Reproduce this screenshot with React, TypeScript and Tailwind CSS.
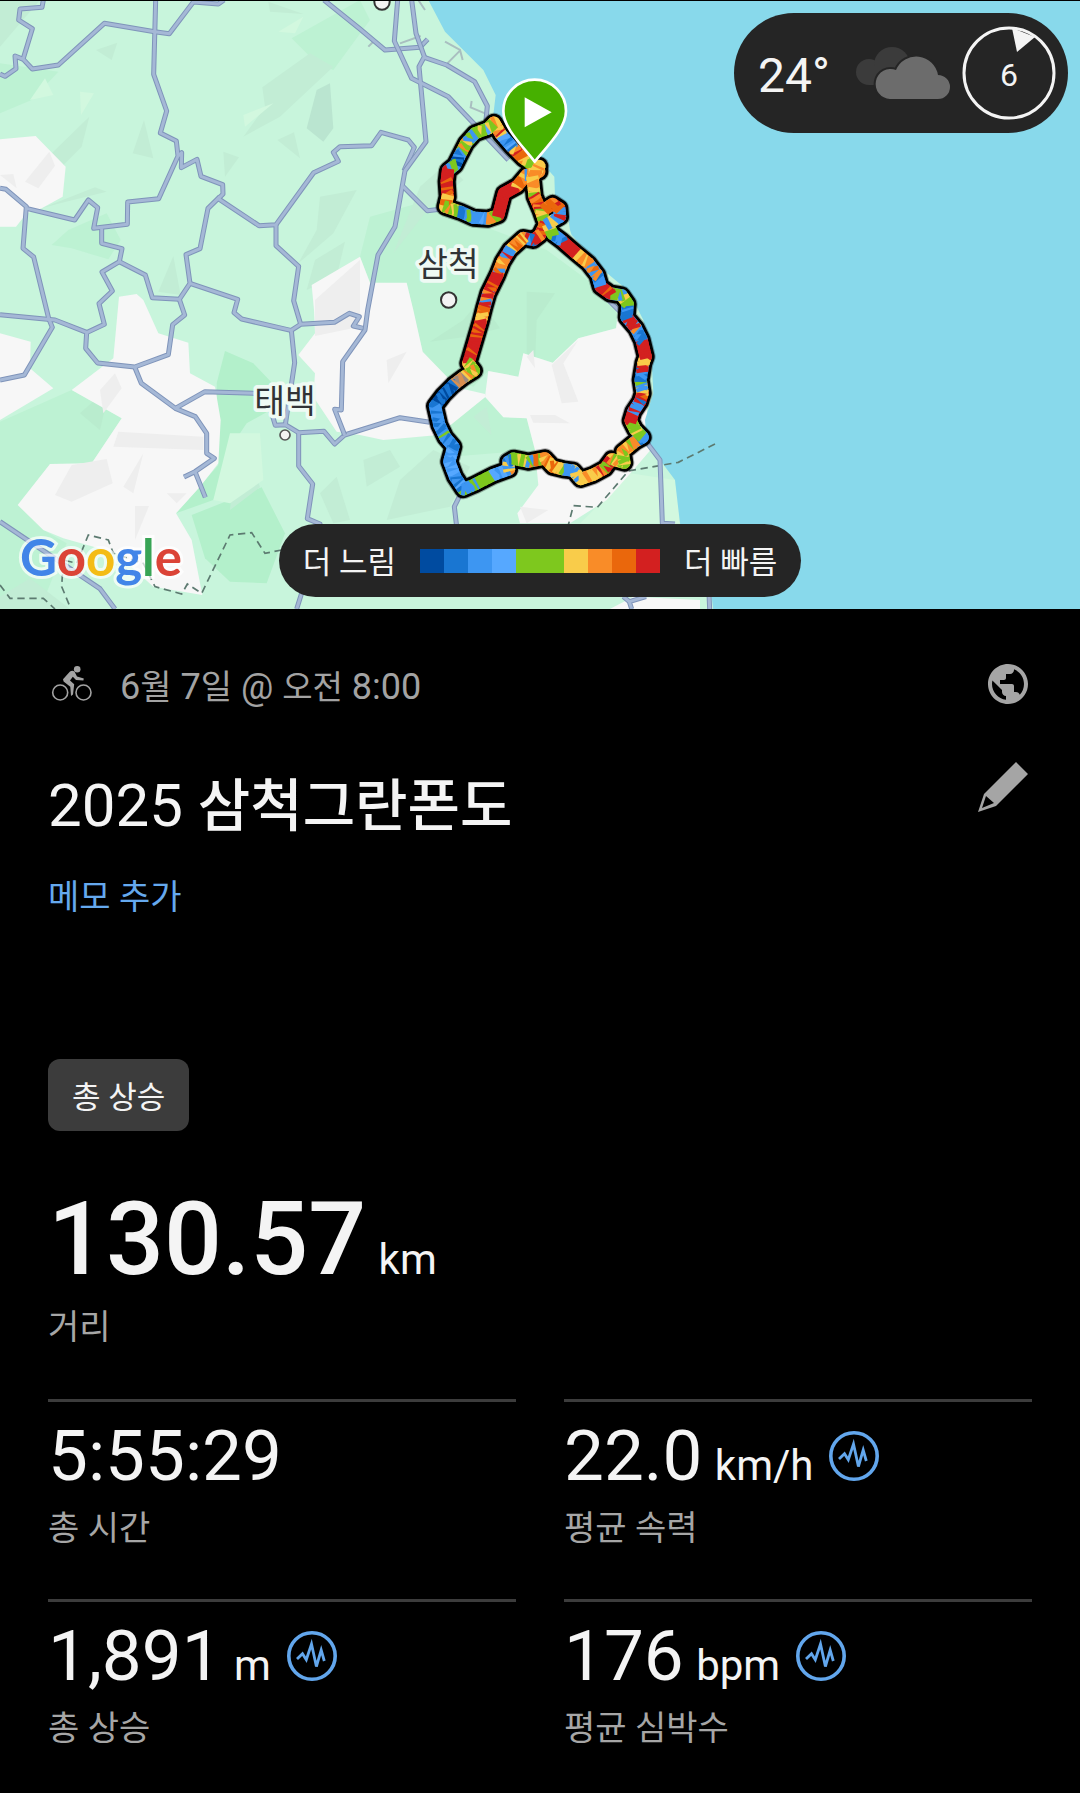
import { MdPublic } from 'react-icons/md';

type Pt = [number, number];

/* ---------- Route ---------- */

const DK = '#004ba0';
const BL = '#1976d2';
const LB = '#3d96f2';
const SK = '#56a8ff';
const GR = '#7ec81e';
const YE = '#f9cc4a';
const OR = '#f98c28';
const DO = '#ea670c';
const RE = '#d32020';

/* Each leg ends at the given point and is coloured from its palette. */
type Leg = [number, number, string[]];

const northLoop: Leg[] = [
  [525, 500, [GR]],
  [490, 475, [GR, GR, YE]],
  [455, 440, [OR, YE, DO, RE]],
  [422, 402, [LB, BL, SK]],
  [402, 368, [OR, RE, YE]],
  [385, 385, [YE, OR, GR]],
  [345, 400, [GR, YE, GR, SK]],
  [318, 430, [GR, GR, LB]],
  [300, 465, [OR, LB, GR, YE]],
  [285, 495, [BL, DK, LB]],
  [264, 512, [LB, GR, BL]],
  [260, 545, [RE]],
  [263, 590, [RE, RE, DO]],
  [256, 620, [OR, DO, YE]],
  [300, 635, [YE, OR, GR]],
  [340, 653, [LB, GR, BL]],
  [385, 656, [LB, SK, GR]],
  [415, 645, [GR, OR]],
  [432, 580, [RE]],
  [472, 558, [RE]],
  [500, 525, [OR, DO, YE]],
  [538, 515, [OR, YE, LB]],
];

const southLoop: Leg[] = [
  [538, 498, [BL]],
  [518, 535, [YE, OR, OR]],
  [524, 590, [YE, OR, YE, GR]],
  [542, 632, [DO, RE, OR, OR]],
  [556, 672, [OR, GR, YE]],
  [540, 705, [OR, RE, DO]],
  [520, 720, [RE, OR]],
  [490, 714, [BL, RE, LB]],
  [450, 750, [OR, DO, YE]],
  [428, 785, [RE, LB, OR]],
  [412, 825, [OR, YE, LB, DO]],
  [385, 880, [RE, DO, RE]],
  [372, 925, [LB, OR, RE]],
  [362, 965, [OR, DO, YE]],
  [325, 1090, [RE, RE, RE, RE, DO]],
  [342, 1112, [YE, GR]],
  [310, 1132, [GR, YE, OR]],
  [280, 1155, ['#d98f50', '#9b8a80']],
  [250, 1185, [BL, DK]],
  [225, 1218, [DK, BL, LB]],
  [238, 1275, [LB, BL, LB]],
  [256, 1312, [LB, BL, SK, GR]],
  [280, 1340, [LB, BL]],
  [268, 1385, [LB, BL, SK, OR]],
  [285, 1430, [LB, SK]],
  [310, 1468, [LB, SK, BL]],
  [345, 1453, [GR, LB, YE]],
  [400, 1425, [GR, GR, GR, LB]],
  [447, 1408, [LB, SK, YE]],
  [445, 1385, [OR, YE, LB]],
  [460, 1376, [BL, LB, GR]],
  [505, 1385, [GR, YE, GR, GR]],
  [555, 1375, [OR, LB, GR, DO]],
  [578, 1400, [OR, YE, DO]],
  [610, 1408, [OR, DO, YE]],
  [640, 1412, [LB, BL, GR]],
  [662, 1437, [YE, LB]],
  [700, 1424, [YE, OR]],
  [735, 1405, [OR, YE, RE]],
  [755, 1378, [RE, LB, GR]],
  [793, 1388, [YE, OR, GR]],
  [788, 1355, [GR, YE]],
  [825, 1325, [OR, YE, GR]],
  [848, 1312, [LB, OR, BL]],
  [825, 1288, [LB, GR, YE]],
  [812, 1262, [YE, GR]],
  [820, 1235, [RE]],
  [840, 1205, [RE, LB]],
  [848, 1180, [RE, BL, DO]],
  [842, 1140, [YE, LB, RE, GR]],
  [850, 1090, [BL, LB, BL, RE]],
  [857, 1070, [OR, YE]],
  [845, 1020, [RE]],
  [828, 985, [LB, BL, GR]],
  [800, 952, [LB, RE, OR]],
  [803, 912, [LB, BL, BL]],
  [785, 886, [GR, YE]],
  [750, 880, [LB, RE, GR]],
  [722, 860, [RE, RE, DO]],
  [712, 825, [BL, RE, LB]],
  [685, 790, [LB, OR, DO]],
  [645, 757, [OR, YE, OR]],
  [605, 722, [RE]],
  [578, 702, [LB, BL]],
  [562, 672, [GR, YE]],
  [600, 650, [LB, BL, YE]],
  [598, 625, [LB, RE]],
  [578, 612, [RE, DO]],
  [550, 630, [OR, DO]],
];

type Tick = { x: number; y: number; angle: number; color: string };

function buildTicks(legs: Leg[], seed: number): Tick[] {
  let s = seed;
  const rand = () => {
    s = (s * 16807) % 2147483647;
    return s / 2147483647;
  };
  const ticks: Tick[] = [];
  for (let i = 1; i < legs.length; i++) {
    const [x0, y0] = legs[i - 1];
    const [x1, y1, palette] = legs[i];
    const length = Math.hypot(x1 - x0, y1 - y0);
    const count = Math.max(2, Math.round(length / 7));
    const heading = (Math.atan2(y1 - y0, x1 - x0) * 180) / Math.PI;
    for (let k = 0; k < count; k++) {
      const t = k / count;
      ticks.push({
        x: x0 + (x1 - x0) * t,
        y: y0 + (y1 - y0) * t,
        angle: heading + (palette.length > 1 ? (rand() - 0.5) * 60 : 0),
        color: palette[Math.floor(rand() * palette.length)],
      });
    }
  }
  return ticks;
}

const toPoints = (legs: Leg[]) => legs.map(([x, y]) => `${x},${y}`).join(' ');

function RouteLine({ legs, seed }: { legs: Leg[]; seed: number }) {
  return (
    <g>
      {legs.slice(1).map(([x, y, palette], i) => (
        <line
          key={i}
          x1={legs[i][0]}
          y1={legs[i][1]}
          x2={x}
          y2={y}
          stroke={palette[0]}
          strokeWidth="37"
          strokeLinecap="round"
        />
      ))}
      {buildTicks(legs, seed).map((t, i) => (
        <rect
          key={i}
          x="-6"
          y="-18"
          width="12"
          height="36"
          fill={t.color}
          transform={`translate(${t.x.toFixed(1)} ${t.y.toFixed(1)}) rotate(${t.angle.toFixed(1)})`}
        />
      ))}
    </g>
  );
}

/* ---------- Terrain ---------- */

const roadsWest: string[] = [
  'M130 0 L126 22 L60 27 L56 60 L97 86 L70 175',
  'M0 222 L15 229 L48 206 L45 168 L70 178 L97 207 L175 195 L313 70 L464 95 L508 101 L580 6 L655 12 L672 0',
  'M467 0 L461 223 L500 333 L481 399 L529 423 L534 468 L476 596 L383 606 L382 673 L281 685 L293 623 L265 600 L224 660 L79 625',
  'M534 468 L545 458 L544 503 L591 478 L603 529 L668 554 L669 582 L655 596 L777 677 L828 674 L941 518 L1015 484 L1000 457 L1020 440 L1115 437 L1143 397 L1225 420 L1243 442 L1212 512',
  'M0 565 L18 568 L79 620 L69 745 L101 771 L146 955 L157 982 L73 1125 L0 1140',
  'M305 685 L305 730 L366 746 L358 785 L306 816 L337 873 L297 911 L313 973 L262 997',
  'M358 785 L436 825 L457 893 L538 898 L570 850 L558 764 L600 746 L624 625 L660 590',
  'M570 850 L713 898 L702 938 L725 957 L872 991',
  'M538 898 L554 945 L518 974 L505 1064 L404 1101 L293 1089 L257 1045 L260 997 L165 960 L0 944',
  'M828 674 L828 737 L896 799 L881 902 L902 973',
  'M404 1101 L424 1150 L526 1225 L615 1175 L760 1180 L800 1190 L826 1276 L856 1274 L896 1298 L972 1294 L1004 1332 L1034 1305 L1200 1253 L1290 1267',
  'M526 1225 L586 1250 L620 1300 L620 1360 L643 1375 L585 1415 L552 1431 M585 1415 L616 1492',
  'M856 1274 L884 1088 L874 991 L902 973 L1003 967 L1048 940 L1078 950 L1060 978 L1090 985',
  'M896 1298 L896 1398 L938 1452 L922 1556 L960 1572 L930 1700 L890 1827',
  'M0 1565 L300 1766 L345 1827',
  'M972 0 L1080 87 L1155 150 L1260 142 L1283 118',
];

const roadsEast: string[] = [
  'M113 0 L103 123 L155 235 L265 290 L445 480',
  'M155 0 L168 100 L193 170 L177 200 L198 425 L135 512 L105 680 L54 765 L23 930 L15 990 L-52 1085 L-56 1230 L-76 1228 L-46 1305',
  'M193 172 L260 195 L344 245 L382 318 L378 360',
  'M130 560 L202 632 L240 628',
  'M740 895 L785 940',
  'M862 1330 L900 1380 L907 1570 L945 1572',
  'M298 1490 L283 1520 L290 1580',
  'M790 1790 L808 1805 L858 1790 M808 1805 L815 1827',
  'M1047 1780 L1049 1827',
];

function Roads({ paths }: { paths: string[] }) {
  return (
    <g fill="none" strokeLinejoin="round">
      {paths.map((d) => (
        <path key={`c${d}`} d={d} stroke="#7f94ba" strokeWidth="15" />
      ))}
      {paths.map((d) => (
        <path key={`f${d}`} d={d} stroke="#a5b8d6" strokeWidth="9" />
      ))}
    </g>
  );
}

const poly = (fill: string, shapes: string[]) => (
  <g fill={fill}>
    {shapes.map((points) => (
      <polygon key={points} points={points} />
    ))}
  </g>
);

function MapDrawing() {
  const pin: Pt = [525, 485];
  return (
    <svg viewBox="0 0 3240 1824" className="block h-auto w-full" role="img" aria-label="경로 지도">
      <g transform="translate(0 -3)">
        <rect width="3240" height="1830" fill="#c8f5dc" />

        {poly('#bdf2d3', [
          '0,190 175,215 95,300 0,340',
          '155,735 205,690 320,640 362,720 325,778 215,745',
          '0,1265 215,1170 365,1255 275,1390 150,1392 55,1515 130,1590 200,1630 120,1827 0,1827',
          '875,115 1080,0 1110,60 1000,210 950,190',
          '1110,650 1290,600 1480,690 1640,750 1790,860 1850,920 1848,985 1735,1015 1658,1088 1570,1060 1555,1130 1465,1113 1420,1160 1345,1135 1268,1055 1220,850 1110,848 1080,770',
          '1455,1192 1510,1252 1580,1255 1605,1350 1350,1370 1310,1305 1350,1270',
        ])}
        {poly('#b3f0cb', [
          '650,1150 675,1053 760,1090 865,1200 740,1270 700,1330 680,1400 640,1500 528,1540 655,1395',
          '575,1545 785,1462 855,1600 800,1750 690,1745 615,1675',
        ])}
        {poly('#c2edd5', [
          '0,0 120,0 60,70 0,140',
          '75,545 160,455 268,350 245,440 120,565',
          '787,262 930,160 1000,200 840,350 730,410 795,320',
          '288,150 352,128 335,180',
          '398,460 432,360 460,475',
          '475,875 520,768 542,885',
          '670,455 717,472 675,530',
          '832,420 882,397 900,475',
          '960,590 1070,570 1000,700 895,790 950,690',
          '945,780 1035,725 1010,830 920,870',
          '125,625 285,562 320,575 180,610',
          '805,5 910,42 810,35',
          '700,1420 760,1400 780,1462 690,1530',
          '960,1480 1010,1430 1050,1560 1000,1570',
          '0,1790 90,1735 210,1827 0,1827',
          '1300,1350 1410,1400 1350,1520 1160,1560 1200,1440',
          '1090,1380 1170,1350 1200,1400 1100,1460',
          '1420,1250 1460,1220 1475,1305',
          '1180,760 1260,560 1340,490 1390,540 1290,620',
        ])}
        {poly('#b9ecce', [
          '1580,875 1665,880 1610,960 1605,1095 1580,1060',
          '1290,1025 1390,960 1440,900 1500,985 1400,1010',
          '240,1240 330,1160 300,1290',
        ])}
        {poly('#bae5d0', ['920,385 950,270 990,250 1000,385 970,425'])}
        {poly('#d2f8df', [
          '240,275 282,280 243,345',
          '90,300 135,235 160,285',
          '730,345 820,310 735,380',
          '835,95 910,50 885,100',
          '690,1300 780,1300 790,1440 690,1510 640,1500',
          '1890,1420 2025,1440 2040,1570 1740,1570',
        ])}

        {poly('#f7f7f7', [
          '0,418 107,408 197,500 188,590 125,625 80,640 48,680 0,680',
          '0,1000 92,1025 90,1105 160,1165 0,1260',
          '357,890 410,882 430,900 475,1000 565,1028 570,1120 645,1160 662,1260 655,1390 600,1460 528,1540 575,1620 607,1785 460,1760 350,1660 190,1615 130,1590 53,1515 150,1392 275,1390 365,1255 215,1170 340,1075',
          '1080,770 935,855 942,930 945,1000 895,1065 945,1120 940,1190 1010,1295 1080,1305 1150,1320 1315,1305 1455,1192 1455,1182 1380,1165 1345,1135 1268,1055 1240,930 1220,848 1110,848',
          '1455,1190 1465,1113 1555,1130 1570,1060 1658,1088 1735,1015 1848,985 1855,940 1960,1080 1935,1200 1960,1340 1900,1410 1820,1500 1710,1570 1560,1570 1552,1540 1615,1455 1605,1350 1580,1255 1510,1252',
          '1830,1827 1900,1790 2100,1800 2100,1827',
        ])}
        {poly('#eeeeee', [
          '75,545 148,455 165,497 115,565',
          '0,525 40,522 50,565',
          '355,1295 610,1310 610,1350 340,1340',
          '165,1485 215,1395 320,1377 338,1450 215,1505',
          '370,1460 430,1360 400,1480',
          '405,1518 447,1518 405,1620',
          '500,1480 560,1480 530,1510',
          '945,900 1080,780 1080,980 945,1008',
          '1160,1080 1220,1055 1165,1150',
          '1655,1095 1735,1020 1690,1090 1735,1205 1685,1210',
          '1580,1070 1605,1105 1600,1050',
          '1590,1245 1665,1245 1710,1270 1600,1268',
          '1560,1520 1645,1530 1580,1570',
          '300,1170 345,1120 365,1165 310,1240',
        ])}

        <polygon
          fill="#88d9eb"
          points="1285,0 1335,95 1450,210 1487,285 1480,345 1600,460 1663,530 1665,590 1700,620 1710,690 1715,705 1810,810 1870,860 1910,920 1930,960 1955,1080 1960,1180 1935,1260 1940,1320 1980,1380 2025,1440 2040,1570 2135,1790 2140,1830 3240,1830 3240,0"
        />

        <g fill="none" stroke="#5c7a70" strokeWidth="5" strokeDasharray="22 14">
          <path d="M2145 1332 L2035 1387 L1885 1413 L1792 1522 L1720 1517 L1705 1575" />
          <path d="M845 1650 L795 1660 L755 1598 L690 1605 L605 1780 L562 1752 L545 1782 L465 1760 L430 1690 L340 1660 L325 1620 L265 1605 L230 1690 L190 1680 L185 1760 L210 1820" />
          <path d="M0 1755 L30 1795 L130 1795 L165 1827" />
        </g>
        <g fill="none" stroke="#a9bfc0" strokeWidth="6">
          <path d="M1255 0 L1275 30 M1200 130 L1262 108 M1335 125 L1380 150 L1388 180 M1380 152 L1342 190 M1415 303 L1412 322 L1455 340 M1105 140 L1125 120" />
        </g>

        <Roads paths={roadsWest} />
        <g transform="translate(1080 0)">
          <Roads paths={roadsEast} />
        </g>

        <g fill="#f3f3f3">
          <circle cx="1146" cy="6" r="23" stroke="#333" strokeWidth="6" />
          <circle cx="1346" cy="900" r="23" stroke="#333" strokeWidth="6" />
          <circle cx="855" cy="1305" r="15" stroke="#555" strokeWidth="5" />
        </g>

        <g transform="translate(1080 0)">
          <g fill="none" stroke="#000" strokeLinejoin="round" strokeLinecap="round">
            <polyline points={toPoints(northLoop)} strokeWidth="60" strokeOpacity="0.3" />
            <polyline points={toPoints(southLoop)} strokeWidth="60" strokeOpacity="0.3" />
            <polyline points={toPoints(northLoop)} strokeWidth="54" />
            <polyline points={toPoints(southLoop)} strokeWidth="54" />
          </g>
          <RouteLine legs={northLoop} seed={71} />
          <RouteLine legs={southLoop} seed={1234} />
          <path
            d={`M${pin[0] - 1} ${pin[1]} C490 440 430 385 430 333 A94 94 0 0 1 618 333 C618 385 560 440 ${pin[0] - 1} ${pin[1]} Z`}
            fill="#46b000"
            stroke="#fff"
            strokeWidth="8"
            strokeLinejoin="round"
          />
          <path d="M494 292 L575 337 L494 382 Z" fill="#fff" />
        </g>

        <g
          fill="#303336"
          stroke="#effaf4"
          strokeWidth="22"
          strokeLinejoin="round"
          paintOrder="stroke"
          textAnchor="middle"
          fontSize="100"
          className="font-['Noto_Sans_CJK_KR',sans-serif]"
        >
          <text x="1344" y="828">삼척</text>
          <text x="855" y="1238">태백</text>
        </g>
      </g>
    </svg>
  );
}

/* ---------- Map overlays ---------- */

function GoogleMark() {
  return (
    <a
      href="#google"
      aria-label="Google"
      className="absolute bottom-5 left-5 font-['Lato',sans-serif] text-[51px] leading-[64px] font-bold [paint-order:stroke] [-webkit-text-stroke:6px_#ffffffb0]"
    >
      <span className="text-[#4285e8]">G</span>
      <span className="text-[#db4437]">o</span>
      <span className="text-[#f4bc16]">o</span>
      <span className="text-[#4285e8]">g</span>
      <span className="text-[#38a455]">l</span>
      <span className="text-[#db4437]">e</span>
    </a>
  );
}

function Weather() {
  return (
    <div className="absolute top-3 right-3 flex h-[120px] items-center rounded-full bg-[#252525] pr-3 pl-6 text-[#f4f4f4]">
      <span className="pt-1.5 text-[48px] leading-[56px]">24°</span>
      <svg viewBox="0 0 94 54" className="ml-[26px] h-[54px] w-[94px]" aria-hidden="true">
        <g fill="#3b3b3b">
          <circle cx="13" cy="26" r="13" />
          <circle cx="36" cy="19" r="18" />
          <rect x="13" y="20" width="24" height="19" />
        </g>
        <g fill="#6c6c6c" stroke="#252525" strokeWidth="4" paintOrder="stroke">
          <path d="M34 53 A15 15 0 1 1 40 24 A22 22 0 0 1 82 29 A12 12 0 0 1 82 53 Z" />
        </g>
      </svg>
      <div className="relative ml-3 grid size-[94px] place-items-center">
        <svg viewBox="0 0 94 94" className="absolute inset-0 size-full" aria-hidden="true">
          <circle cx="47" cy="47" r="45" fill="none" stroke="#f4f4f4" strokeWidth="3" />
          <path d="M50 2 L73 11 L55 26 Z" fill="#f4f4f4" />
        </svg>
        <span className="pt-1 text-[32px] leading-[40px]">6</span>
      </div>
    </div>
  );
}

function SpeedLegend() {
  return (
    <div className="absolute inset-x-0 bottom-3 flex justify-center">
      <div className="flex h-[73px] items-center gap-6 rounded-full bg-[#252525] px-6 text-[31px] leading-[40px] whitespace-nowrap text-[#f4f4f4]">
        <span className="pt-1">더 느림</span>
        <div className="flex h-6" aria-hidden="true">
          <i className="w-6 bg-[#004ba0]" />
          <i className="w-6 bg-[#1976d2]" />
          <i className="w-6 bg-[#3d96f2]" />
          <i className="w-6 bg-[#56a8ff]" />
          <i className="w-12 bg-[#7ec81e]" />
          <i className="w-6 bg-[#f9cc4a]" />
          <i className="w-6 bg-[#f98c28]" />
          <i className="w-6 bg-[#ea670c]" />
          <i className="w-6 bg-[#d32020]" />
        </div>
        <span className="pt-1">더 빠름</span>
      </div>
    </div>
  );
}

/* ---------- Icons ---------- */

function CyclistIcon() {
  return (
    <svg viewBox="0 0 48 48" className="size-12" fill="#a3a3a3" aria-hidden="true">
      <circle cx="12.2" cy="32.5" r="7.5" fill="none" stroke="#a3a3a3" strokeWidth="1.6" />
      <circle cx="35.5" cy="32.5" r="7.5" fill="none" stroke="#a3a3a3" strokeWidth="1.6" />
      <circle cx="29.2" cy="9.2" r="3.3" />
      <path d="M15 19.3 L22 11.6 Q24.5 10 26.6 11.8 L29 16.4 L35.8 18.4 L35.4 20.6 L28 19.9 L24.8 16.8 L22 20.4 L26.2 24.2 L25 34.5 L23 36 L22.3 26.8 L15.6 21.6 Z" />
    </svg>
  );
}

function PencilIcon() {
  return (
    <svg viewBox="0 0 50 50" className="size-[50px]" aria-hidden="true">
      <path
        fillRule="evenodd"
        fill="#a5a5a5"
        d="M38 0 L50 12 L18 44 L0 50 L6 32 Z M8 34 L4 46 L16 41 Z"
      />
    </svg>
  );
}

function PulseIcon() {
  return (
    <svg viewBox="0 0 50 50" className="size-[50px]" fill="none" stroke="#62a6ec" aria-hidden="true">
      <circle cx="25" cy="25" r="23.2" strokeWidth="3.6" />
      <path d="M10 28 L15.5 22.7 L19.3 28.7 L24.5 13 L29.4 35.5 L34.2 19 L37.3 30" strokeWidth="2.8" />
    </svg>
  );
}

/* ---------- Statistics ---------- */

type StatProps = { value: string; unit?: string; label: string };

function Stat({ value, unit, label }: StatProps) {
  return (
    <div className="border-t-[3px] border-[#3c3c3c] pt-3 pb-[47px]">
      <dd className="flex items-center">
        <span className="text-[71px] leading-[84px]">
          {value}
          {unit && <span className="ml-0.5 text-[42px] leading-none"> {unit}</span>}
        </span>
        {unit && (
          <button type="button" aria-label={`${label} 차트`} className="ml-4">
            <PulseIcon />
          </button>
        )}
      </dd>
      <dt className="mt-1.5 text-[34px] leading-[48px] text-[#a6a6a6]">{label}</dt>
    </div>
  );
}

const stats: StatProps[] = [
  { value: '5:55:29', label: '총 시간' },
  { value: '22.0', unit: 'km/h', label: '평균 속력' },
  { value: '1,891', unit: 'm', label: '총 상승' },
  { value: '176', unit: 'bpm', label: '평균 심박수' },
];

export default function App() {
  return (
    <div className="min-h-screen bg-black font-['Roboto','Noto_Sans_CJK_KR',sans-serif] text-[#f4f4f4]">
      <header className="relative border-t border-black">
        <MapDrawing />
        <GoogleMark />
        <Weather />
        <SpeedLegend />
      </header>

      <main className="px-12 pt-[50px]">
        <div className="flex items-center">
          <CyclistIcon />
          <p className="mt-2 ml-6 text-[36px] leading-[40px] text-[#a3a3a3]">
            6<span className="text-[34px]">월</span> 7<span className="text-[34px]">일</span> @{' '}
            <span className="text-[33px]">오전</span> 8:00
          </p>
          <button type="button" aria-label="공개 범위" className="ml-auto text-[#a5a5a5]">
            <MdPublic size={48} />
          </button>
        </div>

        <div className="mt-[54px] flex items-start justify-between">
          <h1 className="mt-2 text-[60px] leading-[72px]">
            2025 <span className="text-[57px] font-medium">삼척그란폰도</span>
          </h1>
          <button type="button" aria-label="이름 편집" className="mr-1">
            <PencilIcon />
          </button>
        </div>

        <button type="button" className="mt-[30px] block text-[34px] leading-[48px] text-[#65a9ee]">
          메모 추가
        </button>

        <button
          type="button"
          className="mt-[138px] block h-[72px] rounded-xl bg-[#3c3c3c] px-6 pt-1.5 text-[31px] leading-[40px]"
        >
          총 상승
        </button>

        <dl>
          <div className="mt-12">
            <dd className="text-[102px] leading-[120px] font-medium">
              130.57<span className="ml-0.5 text-[42px] leading-none font-normal"> km</span>
            </dd>
            <dt className="mt-1 text-[34px] leading-[48px] text-[#a6a6a6]">거리</dt>
          </div>
          <div className="mt-12 grid grid-cols-2 gap-x-12">
            {stats.map((stat) => (
              <Stat key={stat.label} {...stat} />
            ))}
          </div>
        </dl>
      </main>
    </div>
  );
}
